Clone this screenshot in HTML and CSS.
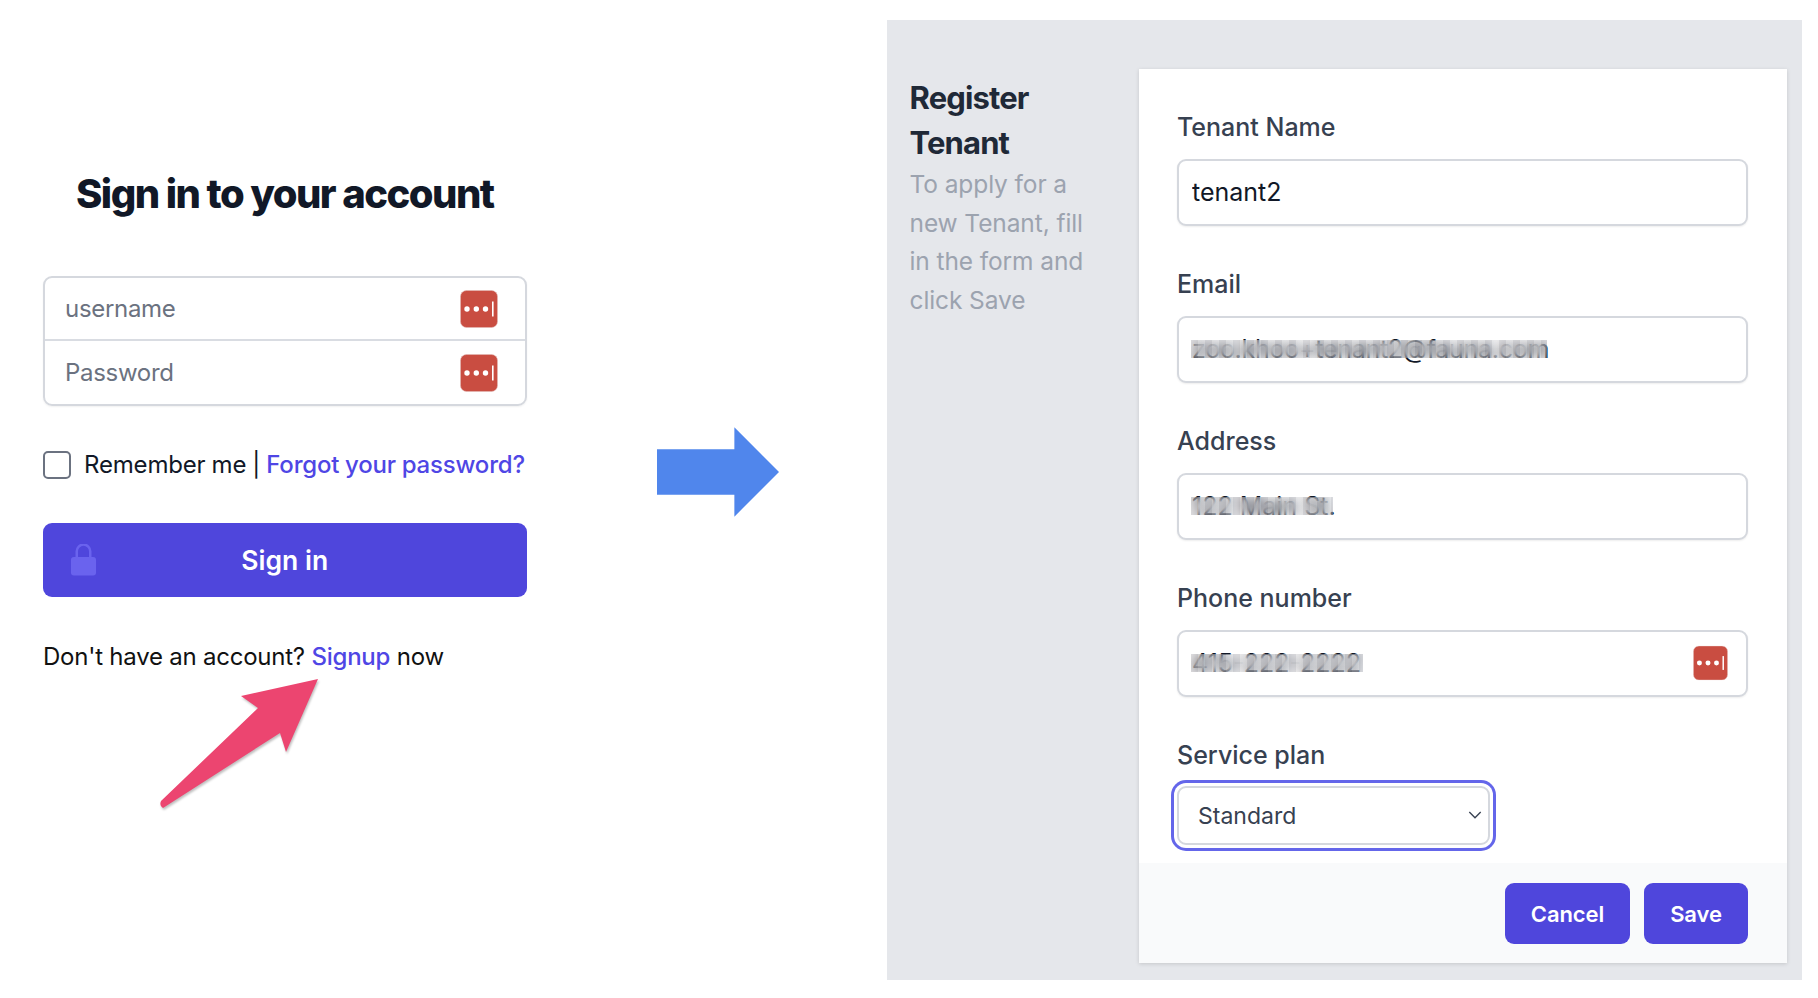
FILE: index.html
```html
<!DOCTYPE html>
<html lang="en">
<head>
<meta charset="utf-8">
<title>Sign in and register tenant</title>
<link rel="stylesheet" href="styles.css">
</head>
<body>
<svg class="defs" width="0" height="0" aria-hidden="true">
  <symbol id="pw" viewBox="0 0 38 38">
    <rect x="0.5" y="0.5" width="37" height="37" rx="6" fill="#c94d41" stroke="#e3b9b5" stroke-width="0.6"/>
    <circle cx="7" cy="19" r="2.7" fill="#fff"/>
    <circle cx="16.3" cy="19" r="2.7" fill="#fff"/>
    <circle cx="25.5" cy="19" r="2.7" fill="#fff"/>
    <rect x="32" y="11.5" width="1.6" height="15" fill="#fff"/>
  </symbol>
</svg>

<main class="login">
  <h1 class="login-title">Sign in to your account</h1>
  <div class="cred-box">
    <div class="cred-row"><input class="cred-input" placeholder="username"><svg class="pw-icon"><use href="#pw"/></svg></div>
    <div class="cred-row cred-row-last"><input class="cred-input" placeholder="Password"><svg class="pw-icon"><use href="#pw"/></svg></div>
  </div>
  <div class="remember">
    <span class="check"></span>
    <span>Remember me | <a class="link" href="#">Forgot your password?</a></span>
  </div>
  <button class="signin">
    <svg class="lock" viewBox="0 0 28 32"><path d="M7 14V7a7 7 0 0 1 14 0V14" fill="none" stroke="#6a63ee" stroke-width="2.600"/><rect x="1" y="13" width="26" height="19" rx="3" fill="#6a63ee"/></svg>
    Sign in
  </button>
  <p class="signup">Don't have an account? <a class="link" href="#">Signup</a> now</p>
  <svg class="pink-arrow" viewBox="0 0 160 130"><path d="M158 0 L81 17 L98 29 L1 122 Q-1 127 3 129 L120 54 L126 73 Z" fill="#ec4570"/></svg>
</main>

<div class="flow-arrow">
  <svg viewBox="0 0 123 90" width="122" height="90"><path d="M0 22H78V0L123 45 78 90V68H0Z" fill="#5086ec"/></svg>
</div>

<section class="panel">
  <aside class="intro">
    <h2 class="intro-title">Register Tenant</h2>
    <p class="intro-text">To apply for a new Tenant, fill in the form and click Save</p>
  </aside>
  <form class="card">
    <div class="fields">
      <div class="field">
        <label class="label">Tenant Name</label>
        <input class="text-input" value="tenant2">
      </div>
      <div class="field">
        <label class="label">Email</label>
        <div class="input-wrap"><input class="text-input text-email" value="zoo.khoo+tenant2@fauna.com"><span class="mosaic mosaic-email"></span></div>
      </div>
      <div class="field">
        <label class="label">Address</label>
        <div class="input-wrap"><input class="text-input" value="122 Main St."><span class="mosaic mosaic-address"></span></div>
      </div>
      <div class="field">
        <label class="label">Phone number</label>
        <div class="input-wrap"><input class="text-input" value="415-222-2222"><span class="mosaic mosaic-phone"></span><svg class="pw-icon pw-small"><use href="#pw"/></svg></div>
      </div>
      <div class="field field-select">
        <label class="label">Service plan</label>
        <div class="select-wrap">
          <select class="select"><option>Standard</option></select>
          <svg class="chevron" viewBox="0 0 16 10"><path d="M1.500 1.500 8 8.200l6.500-6.700" fill="none" stroke="#374151" stroke-width="1.500"/></svg>
        </div>
      </div>
    </div>
    <div class="card-footer">
      <button class="action action-cancel" type="button">Cancel</button>
      <button class="action action-save" type="button">Save</button>
    </div>
  </form>
</section>
</body>
</html>
```
FILE: styles.css
```css
* { box-sizing: border-box; }
html, body { margin: 0; height: 998px; overflow: hidden; }
body {
  display: flex;
  background: #fff;
  font-family: Inter, "Liberation Sans", sans-serif;
  color: #111;
}
.defs { position: absolute; }

.login { position: relative; width: 483.500px; margin-left: 43px; flex: none; }
.login-title {
  margin: 167px 0 0;
  height: 54px;
  line-height: 54px;
  text-align: center;
  font-size: 40px;
  font-weight: 800;
  letter-spacing: -1.550px;
  color: #111827;
  white-space: nowrap;
}
.cred-box {
  margin-top: 55px;
  height: 130px;
  border: 2px solid #d5d8de;
  border-radius: 9px;
  box-shadow: 0 1px 2px rgba(0,0,0,.06);
  display: flex;
  flex-direction: column;
}
.cred-row { position: relative; height: 64px; border-bottom: 2px solid #d9dce2; display: flex; align-items: center; }
.cred-row-last { border-bottom: 0; }
.cred-input {
  flex: 1;
  border: 0;
  outline: 0;
  background: transparent;
  padding: 0 20px;
  font: 400 24px Inter, sans-serif;
  letter-spacing: -.3px;
}
.cred-input::placeholder { color: #6b7280; opacity: 1; }
.pw-icon { position: absolute; right: 27px; top: 50%; width: 38px; height: 38px; transform: translateY(-50%); }
.pw-small { right: 20px; width: 35px; height: 35px; }

.remember { display: flex; align-items: center; gap: 13px; margin-top: 44px; font-size: 24px; letter-spacing: -.17px; word-spacing: -.5px; line-height: 30px; color: #111827; white-space: nowrap; }
.check { width: 28px; height: 28px; flex: none; border: 2px solid #6b7280; border-radius: 5px; background: #fff; }
.link { color: #4f46e5; font-weight: 500; text-decoration: none; }

.signin {
  position: relative;
  display: block;
  width: 100%;
  height: 73.500px;
  margin-top: 43px;
  border: 0;
  border-radius: 9px;
  background: #4f46dc;
  color: #fff;
  font: 600 26.500px Inter, sans-serif;
}
.lock { position: absolute; left: 27px; top: 21px; width: 27px; height: 32px; }
.signup { margin: 45px 0 0; font-size: 24px; letter-spacing: -.23px; line-height: 30px; color: #111; white-space: nowrap; }
.pink-arrow { position: absolute; left: 117px; top: 679px; width: 160px; height: 130px; overflow: visible; filter: drop-shadow(1px 2px 1px rgba(0,0,0,.25)); }

.flow-arrow { flex: none; margin: 427px 0 0 130px; height: 90px; width: 122px; }

.panel {
  flex: none;
  display: flex;
  width: 915px;
  height: 960px;
  margin: 20px 0 0 108px;
  padding: 49px 15px 17px 23px;
  background: #e5e7eb;
}
.intro { width: 229.500px; flex: none; }
.intro-title { margin: 7px 0 0; width: 160px; font-size: 31px; font-weight: 700; line-height: 44.500px; letter-spacing: -.85px; color: #1f2937; }
.intro-text { margin: 0; width: 190px; font-size: 24.500px; letter-spacing: -.1px; line-height: 38.500px; color: #9ca3af; }

.card { flex: 1; display: flex; flex-direction: column; background: #fff; box-shadow: 0 1px 4px rgba(0,0,0,.14); }
.fields { flex: 1; padding: 40px 38.500px 0 38px; display: flex; flex-direction: column; gap: 40.500px; }
.field { display: flex; flex-direction: column; gap: 13.500px; }
.field-select { gap: 13px; }
.label { font-size: 25px; font-weight: 500; line-height: 36px; color: #374151; height: 36px; }
.input-wrap { position: relative; }
.text-input {
  display: block;
  width: 100%;
  height: 67px;
  padding: 0 13px;
  border: 2px solid #d5d8de;
  border-radius: 9px;
  outline: 0;
  box-shadow: 0 1px 2px rgba(0,0,0,.07);
  font: 400 25px Inter, sans-serif;
  color: #111827;
}
.text-email { letter-spacing: -.27px; }
.mosaic {
  position: absolute;
  left: 14px;
  top: 24px;
  height: 18px;
  backdrop-filter: blur(5px);
  background: repeating-linear-gradient(90deg, rgba(140,140,150,.28) 0 7px, rgba(195,195,200,.28) 7px 14px);
}
.mosaic-email { width: 356px; }
.mosaic-address { width: 142px; }
.mosaic-phone { width: 172px; }

.select-wrap { position: relative; width: 313px; height: 59px; }
.select {
  width: 100%;
  height: 100%;
  appearance: none;
  -webkit-appearance: none;
  padding: 0 19px;
  border: 2px solid #d5d8de;
  border-radius: 9px;
  background: #fff;
  outline: 0;
  box-shadow: 0 0 0 3px #fff, 0 0 0 6px #6466ea;
  font: 400 23px Inter, sans-serif;
  color: #374151;
}
.chevron { position: absolute; right: 8px; top: 24px; width: 14px; height: 10px; }

.card-footer { height: 100px; padding: 20px 38.500px 19px 0; display: flex; justify-content: flex-end; gap: 14px; background: #f9fafb; }
.action { height: 61px; border: 0; border-radius: 9px; background: #4f46dc; color: #fff; font: 600 22px Inter, sans-serif; letter-spacing: -.1px; }
.action-cancel { width: 125px; }
.action-save { width: 104px; }
```
